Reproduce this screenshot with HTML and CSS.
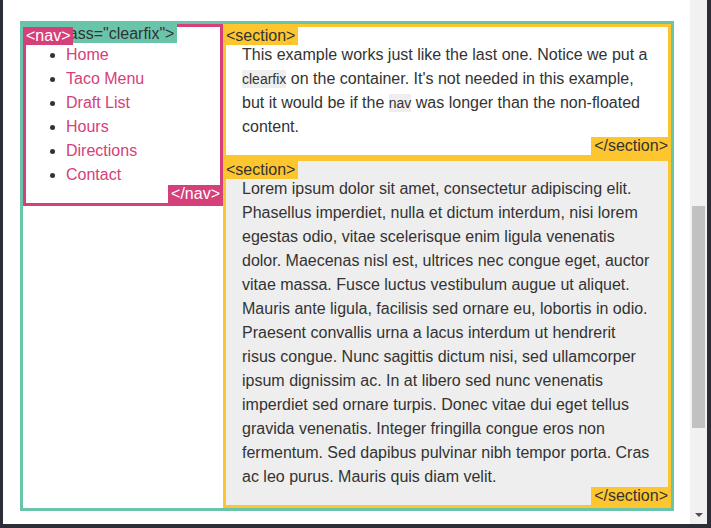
FILE: index.html
```html
<!DOCTYPE html>
<html>
<head>
<meta charset="utf-8">
<link rel="stylesheet" href="styles.css">
</head>
<body>
<div class="frame">
  <div class="viewport">
    <div class="clearfix">
      <span class="tag open tag-green">&lt;div class="clearfix"&gt;</span>
      <nav class="nav">
        <span class="tag open tag-pink">&lt;nav&gt;</span>
        <ul>
          <li><a href="#">Home</a></li>
          <li><a href="#">Taco Menu</a></li>
          <li><a href="#">Draft List</a></li>
          <li><a href="#">Hours</a></li>
          <li><a href="#">Directions</a></li>
          <li><a href="#">Contact</a></li>
        </ul>
        <span class="tag close tag-pink">&lt;/nav&gt;</span>
      </nav>
      <section class="section">
        <span class="tag open tag-yellow">&lt;section&gt;</span>
        <p>This example works just like the last one. Notice we put a <code>clearfix</code> on the container. It's not needed in this example, but it would be if the <code>nav</code> was longer than the non-floated content.</p>
        <span class="tag close tag-yellow">&lt;/section&gt;</span>
      </section>
      <section class="section section-gray">
        <span class="tag open tag-yellow">&lt;section&gt;</span>
        <p>Lorem ipsum dolor sit amet, consectetur adipiscing elit. Phasellus imperdiet, nulla et dictum interdum, nisi lorem egestas odio, vitae scelerisque enim ligula venenatis dolor. Maecenas nisl est, ultrices nec congue eget, auctor vitae massa. Fusce luctus vestibulum augue ut aliquet. Mauris ante ligula, facilisis sed ornare eu, lobortis in odio. Praesent convallis urna a lacus interdum ut hendrerit risus congue. Nunc sagittis dictum nisi, sed ullamcorper ipsum dignissim ac. In at libero sed nunc venenatis imperdiet sed ornare turpis. Donec vitae dui eget tellus gravida venenatis. Integer fringilla congue eros non fermentum. Sed dapibus pulvinar nibh tempor porta. Cras ac leo purus. Mauris quis diam velit.</p>
        <span class="tag close tag-yellow">&lt;/section&gt;</span>
      </section>
    </div>
  </div>
  <div class="scrollbar">
    <div class="thumb"></div>
    <div class="arrow-down"></div>
  </div>
</div>
</body>
</html>
```

FILE: styles.css
```css
* { box-sizing: border-box; }
html, body { margin: 0; padding: 0; }
body {
  font-family: "Liberation Sans", Arial, sans-serif;
  font-size: 16px;
  line-height: 24px;
  color: #333;
  background: #fff;
}
.frame {
  display: flex;
  height: 528px;
  border-left: 3px solid #2b2e36;
  border-right: 4px solid #2b2e36;
  border-bottom: 4px solid #2b2e36;
  background: #fff;
}
.viewport {
  flex: 1;
  overflow: hidden;
  padding: 21px 0 0 17px;
}
.clearfix {
  position: relative;
  width: 654px;
  border: 3px solid #6ac4aa;
  background: #fff;
  display: flow-root;
}
.nav {
  position: relative;
  float: left;
  width: 200px;
  border: 3px solid #d6407a;
  background: #fff;
}
.nav ul {
  margin: 16px 0;
  padding-left: 40px;
}
.nav a {
  color: #d6407a;
  text-decoration: none;
}
.section {
  position: relative;
  margin-left: 200px;
  border: 3px solid #fdc62e;
  padding: 16px;
  background: #fff;
}
.section-gray { background: #eee; }
.section p { margin: 0; }
code {
  font-family: "Liberation Sans", Arial, sans-serif;
  font-size: 14px;
  line-height: 16px;
  background: #eee;
  padding: 1px 0;
}
.tag {
  position: absolute;
  font-size: 16px;
  line-height: 18px;
  padding: 0 3px;
  white-space: nowrap;
}
.open { top: 0; left: -3px; }
.close { bottom: 0; right: -3px; }
.tag-green { background: #6ac4aa; color: #333; line-height: 19px; z-index: 1; }
.tag-pink { background: #d6407a; color: #fff; z-index: 2; }
.tag-yellow { background: #fdc62e; color: #333; }
.scrollbar {
  width: 17px;
  flex: none;
  background: #f1f1f1;
  display: flex;
  flex-direction: column;
  padding-top: 206px;
}
.thumb {
  width: 13px;
  height: 222px;
  margin-left: 2px;
  background: #c1c1c1;
}
.arrow-down {
  margin-top: auto;
  margin-bottom: 7px;
  align-self: center;
  width: 0;
  height: 0;
  border-top: 4px solid #505050;
  border-left: 4px solid transparent;
  border-right: 4px solid transparent;
}
```
